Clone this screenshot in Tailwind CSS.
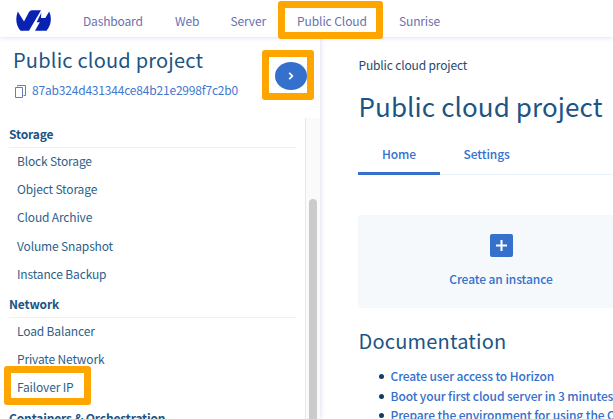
<!DOCTYPE html>
<html lang="en">
<head>
<meta charset="utf-8">
<title>Public cloud project</title>
<script src="https://cdn.jsdelivr.net/npm/@tailwindcss/browser@4"></script>
</head>
<body class="relative flex h-[419px] w-[613px] flex-col overflow-hidden whitespace-nowrap bg-white font-['Noto_Sans_CJK_SC','Source_Sans_Pro',sans-serif] text-[12px] tracking-[-0.15px] text-[#2d5f8b]">
  <header class="relative z-20 flex h-[37px] shrink-0 items-start bg-white pt-[10px] shadow-[0_1px_4px_rgba(80,90,200,0.18)]">
    <svg class="ml-[16px] h-[21px] w-[35px] shrink-0" viewBox="0 0 35 21" fill="#0a22b4">
      <path d="M1.800 1.500 8 11.500 13 2Q14 .200 16 .200H25L13 20.700H4.500C.200 16.200-1 8.500 1.800 1.500Z"/>
      <path d="M25.300 2.800 20.600 12.300H23.800L19 20.700H30.600C35 15.500 36.200 8.200 33.200 1.500L29.300 8H25Z"/>
    </svg>
    <nav class="ml-[32px] flex h-[21px] items-center text-[#6a70b0]">
      <a class="w-[92px]">Dashboard</a>
      <a class="w-[55.500px]">Web</a>
      <a class="w-[66.500px]">Server</a>
      <a class="w-[102px] tracking-[-0.080px]">Public Cloud</a>
      <a>Sunrise</a>
    </nav>
  </header>
  <div class="flex min-h-0 flex-1">
    <aside class="relative z-10 flex w-[320px] shrink-0 flex-col bg-white shadow-[1px_0_4px_rgba(80,90,200,0.18)]">
      <div class="flex h-[81px] shrink-0 justify-between pl-[13px] pr-[13px]">
        <div>
          <h1 class="mt-[8px] h-[30px] text-[20px] leading-[30px] tracking-[0.2px] text-[#1c5484]">Public cloud project</h1>
          <div class="mt-[5px] flex h-[20px] items-center gap-[6px] text-[#4278cf]">
            <svg class="mt-[2px] h-[13px] w-[13px]" viewBox="0 0 13 13" fill="none" stroke="#5a82be"><path d="M4.500 1.500V.500H12.500V10.500H10.500M2.500 2.500H9.500V12.500H2.500Z"/></svg>
            <span class="tracking-[-0.190px]">87ab324d431344ce84b21e2998f7c2b0</span>
          </div>
        </div>
        <button class="mt-[25px] flex h-[28px] w-[32px] items-center justify-center rounded-[50%] bg-[#3470cc]">
          <svg class="h-[8px] w-[6px]" viewBox="0 0 6 8" fill="none" stroke="white" stroke-width="1.700"><path d="M1.200.800 4.400 4 1.200 7.200"/></svg>
        </button>
      </div>
      <div class="flex min-h-0 flex-1">
        <div class="min-w-0 flex-1 overflow-hidden pl-[9px] pr-[9px] pt-[1.300px] leading-[28.330px]">
          <h2 class="h-[28.330px] border-b border-[#eaf2fa] pt-px font-bold text-[#1c5484]">Storage</h2>
          <ul class="-mt-px mb-px pl-[8px]">
            <li>Block Storage</li><li>Object Storage</li><li>Cloud Archive</li><li>Volume Snapshot</li><li>Instance Backup</li>
          </ul>
          <h2 class="h-[28.330px] border-b border-[#eaf2fa] pt-px font-bold text-[#1c5484]">Network</h2>
          <ul class="-mt-px mb-px pl-[8px]">
            <li>Load Balancer</li><li>Private Network</li><li>Failover IP</li>
          </ul>
          <h2 class="pt-px font-bold text-[#1c5484]">Containers &amp; Orchestration</h2>
        </div>
        <div class="w-[15px] shrink-0 border-l border-[#e8e8e8] bg-[#fafafa] pl-[3px] pt-[81px]">
          <div class="h-full w-[8px] rounded-t-full bg-[#cbcbcb]"></div>
        </div>
      </div>
    </aside>
    <main class="min-w-0 flex-1 overflow-hidden pl-[38px]">
      <p class="mt-[18px] h-[20px] pl-[0.500px] leading-[20px] text-[#27496d]">Public cloud project</p>
      <h1 class="mt-[11px] h-[40px] pl-[0.500px] text-[26px] leading-[40px] tracking-[0.1px] text-[#1c5484]">Public cloud project</h1>
      <div class="mt-[11px] flex h-[38px] border-b border-[#eaf2fa] font-medium tracking-[-0.080px] text-[#3470cc]">
        <a class="h-[38px] w-[82px] border-b-3 border-[#3470cc] text-center leading-[33px]">Home</a>
        <a class="ml-[23.500px] leading-[33px]">Settings</a>
      </div>
      <section class="mt-[40px] flex h-[93px] w-[286px] flex-col items-center rounded-[3px] bg-[#f5f9fc] pt-[19px] font-medium tracking-[-0.080px] text-[#3470cc]">
        <span class="flex h-[23px] w-[23px] items-center justify-center rounded-[2px] bg-[#3470cc]">
          <svg class="h-[11px] w-[11px]" viewBox="0 0 11 11" stroke="white" stroke-width="2"><path d="M0 5.500H11M5.500 0V11"/></svg>
        </span>
        <span class="mt-[12px] leading-[20px]">Create an instance</span>
      </section>
      <h2 class="mt-[18px] h-[30px] pl-[0.500px] text-[20px] leading-[30px] tracking-[0.2px] text-[#1c5484]">Documentation</h2>
      <ul class="mt-[10px] pl-[21px] font-medium leading-[20px] tracking-[-0.120px] text-[#3470cc]">
        <li class="flex items-center gap-[6.500px]"><i class="size-[5px] shrink-0 rounded-full bg-[#173b62]"></i>Create user access to Horizon</li>
        <li class="flex items-center gap-[6.500px]"><i class="size-[5px] shrink-0 rounded-full bg-[#173b62]"></i>Boot your first cloud server in 3 minutes</li>
        <li class="-mt-px flex items-center gap-[6.500px]"><i class="size-[5px] shrink-0 rounded-full bg-[#173b62]"></i>Prepare the environment for using the OpenStack API</li>
      </ul>
    </main>
  </div>
  <div class="absolute left-[278px] top-[1px] z-30 h-[38px] w-[105px] rounded-[3px] border-7 border-[#ffa500]"></div>
  <div class="absolute left-[262px] top-[50px] z-30 h-[50px] w-[52px] rounded-[3px] border-7 border-[#ffa500]"></div>
  <div class="absolute left-[4px] top-[366px] z-30 h-[39px] w-[87px] rounded-[3px] border-7 border-[#ffa500]"></div>
</body>
</html>
